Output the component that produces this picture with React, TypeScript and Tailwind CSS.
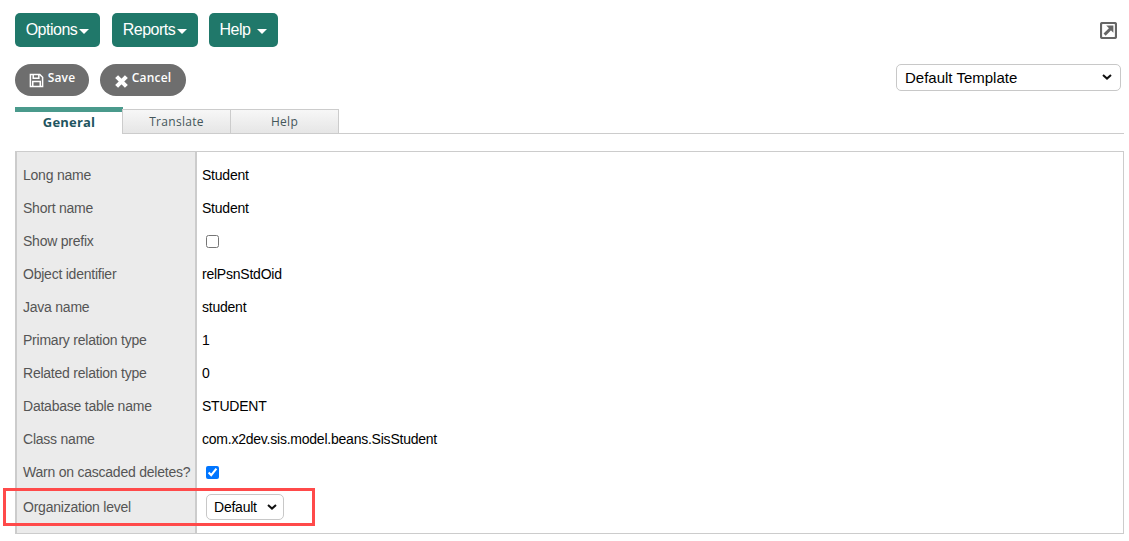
const rows: { label: string; value?: string; kind?: "check" | "checked" }[] = [
  { label: "Long name", value: "Student" },
  { label: "Short name", value: "Student" },
  { label: "Show prefix", kind: "check" },
  { label: "Object identifier", value: "relPsnStdOid" },
  { label: "Java name", value: "student" },
  { label: "Primary relation type", value: "1" },
  { label: "Related relation type", value: "0" },
  { label: "Database table name", value: "STUDENT" },
  { label: "Class name", value: "com.x2dev.sis.model.beans.SisStudent" },
  { label: "Warn on cascaded deletes?", kind: "checked" },
];

function Caret() {
  return <span className="ml-[2px] mt-[3px] h-0 w-0 border-x-[5px] border-t-[5px] border-x-transparent border-t-white" />;
}

function MenuButton({ label, width, gap }: { label: string; width: string; gap?: string }) {
  return (
    <button type="button" className={`flex h-[34px] items-center justify-center rounded-[5px] bg-[#20786a] text-[16px] tracking-[-0.5px] text-white ${width}`}>
      <span className={gap}>{label}</span>
      <Caret />
    </button>
  );
}

function Chevron({ className }: { className: string }) {
  return (
    <svg viewBox="0 0 10 6" className={`pointer-events-none absolute h-[6px] w-[10px] ${className}`} fill="none" stroke="#111" strokeWidth="2">
      <path d="M1 1 L5 4.6 L9 1" />
    </svg>
  );
}

function Field({ row }: { row: (typeof rows)[number] }) {
  if (row.kind) {
    return (
      <input
        type="checkbox"
        readOnly
        checked={row.kind === "checked"}
        className="ml-[4px] size-[13px] accent-[#0075ff]"
      />
    );
  }
  return <span>{row.value}</span>;
}

export default function App() {
  return (
    <div className="relative h-[541px] w-[1129px] overflow-hidden bg-white font-['Liberation_Sans',sans-serif]">
      <div className="flex items-start justify-between pl-[15px] pr-[12px] pt-[13px]">
        <div className="flex">
          <MenuButton label="Options" width="w-[85px]" />
          <div className="ml-[12px]">
            <MenuButton label="Reports" width="w-[86px]" />
          </div>
          <div className="ml-[11px]">
            <MenuButton label="Help" width="w-[69px]" gap="mr-[5px]" />
          </div>
        </div>
        <svg viewBox="0 0 17 17" className="mt-[9px] size-[17px]">
          <rect x="1" y="1" width="15" height="15" rx="1.5" fill="#fff" stroke="#666" strokeWidth="2.2" />
          <path d="M4.6 12.6 L10.5 6.7" fill="none" stroke="#666" strokeWidth="3" />
          <path d="M6.2 3.6 H13.4 V10.8 Z" fill="#666" />
        </svg>
      </div>

      <div className="mt-[17px] flex items-start justify-between pl-[15px] pr-[8px]">
        <div className="flex gap-[11px] font-['Open_Sans',sans-serif] text-[12px] font-semibold tracking-[0.2px] text-white">
          <button type="button" className="flex h-[32px] w-[74px] items-center justify-center gap-[4px] rounded-full bg-[#6e6e6e]">
            <svg viewBox="0 0 16 16" className="size-[15px]" fill="none" stroke="#fff" strokeWidth="1.6">
              <path d="M1.5 1.5 H11.5 L14.5 4.5 V14.5 H1.5 Z" />
              <path d="M4.5 1.5 V5.5 H10.5 V1.5 M4 14.5 V9 H12 V14.5" />
            </svg>
            <span className="-mt-[4px]">Save</span>
          </button>
          <button type="button" className="flex h-[32px] w-[86px] items-center justify-center gap-[4px] rounded-full bg-[#6e6e6e]">
            <svg viewBox="0 0 12 12" className="mt-[2px] size-[13px]" fill="none" stroke="#fff" strokeWidth="3.8">
              <path d="M1.5 1.5 L10.5 10.5 M10.5 1.5 L1.5 10.5" />
            </svg>
            <span className="-mt-[4px]">Cancel</span>
          </button>
        </div>
        <div className="relative">
          <select className="h-[27px] w-[225px] appearance-none rounded-[5px] border border-[#c8c8c8] bg-white pl-[8px] pt-[1px] text-[15px] text-black">
            <option>Default Template</option>
          </select>
          <Chevron className="right-[9px] top-[10px]" />
        </div>
      </div>

      <div className="ml-[15px] mr-[5px] mt-[11px] flex h-[27px] items-end border-b border-[#cccccc] font-['Open_Sans',sans-serif] text-[12px] tracking-[0.3px] text-[#44565a]">
        <div className="-mb-px flex h-[27px] w-[108px] items-center justify-center border-t-[5px] border-[#4a9a8c] bg-white text-[13px] font-bold tracking-[0.2px] text-[#1f5560]">
          General
        </div>
        <div className="-mb-px -ml-px flex h-[25px] w-[109px] items-center justify-center border border-[#cccccc] bg-gradient-to-b from-[#f7f7f7] to-[#e6e6e6]">
          Translate
        </div>
        <div className="-mb-px flex h-[25px] w-[108px] items-center justify-center border border-l-0 border-[#cccccc] bg-gradient-to-b from-[#f7f7f7] to-[#e6e6e6]">
          Help
        </div>
      </div>

      <div className="ml-[15px] mr-[5px] mt-[17px] flex h-[383px] border border-l-[2px] border-[#cccccc] text-[14px] tracking-[-0.23px]">
        <div className="flex w-[178px] flex-col bg-[#ebebeb] pl-[6px] pt-[7px] text-[#555555]">
          {rows.map((row) => (
            <div key={row.label} className="flex h-[33px] shrink-0 items-center whitespace-nowrap">{row.label}</div>
          ))}
          <div className="flex h-[36px] shrink-0 items-center">Organization level</div>
        </div>
        <div className="flex flex-1 flex-col border-l-[2px] border-[#cccccc] pl-[5px] pt-[7px] text-black">
          {rows.map((row) => (
            <div key={row.label} className="flex h-[33px] shrink-0 items-center">
              <Field row={row} />
            </div>
          ))}
          <div className="flex h-[36px] shrink-0 items-center">
            <div className="relative ml-[4px]">
              <select className="block h-[26px] w-[78px] appearance-none rounded-[5px] border border-[#c8c8c8] bg-white pl-[7px] text-[14px]">
                <option>Default</option>
              </select>
              <Chevron className="right-[7px] top-[10px]" />
            </div>
          </div>
        </div>
      </div>

      <div className="absolute left-[3px] top-[488px] h-[38px] w-[312px] border-[3px] border-[#ff4a4a]" />
    </div>
  );
}
